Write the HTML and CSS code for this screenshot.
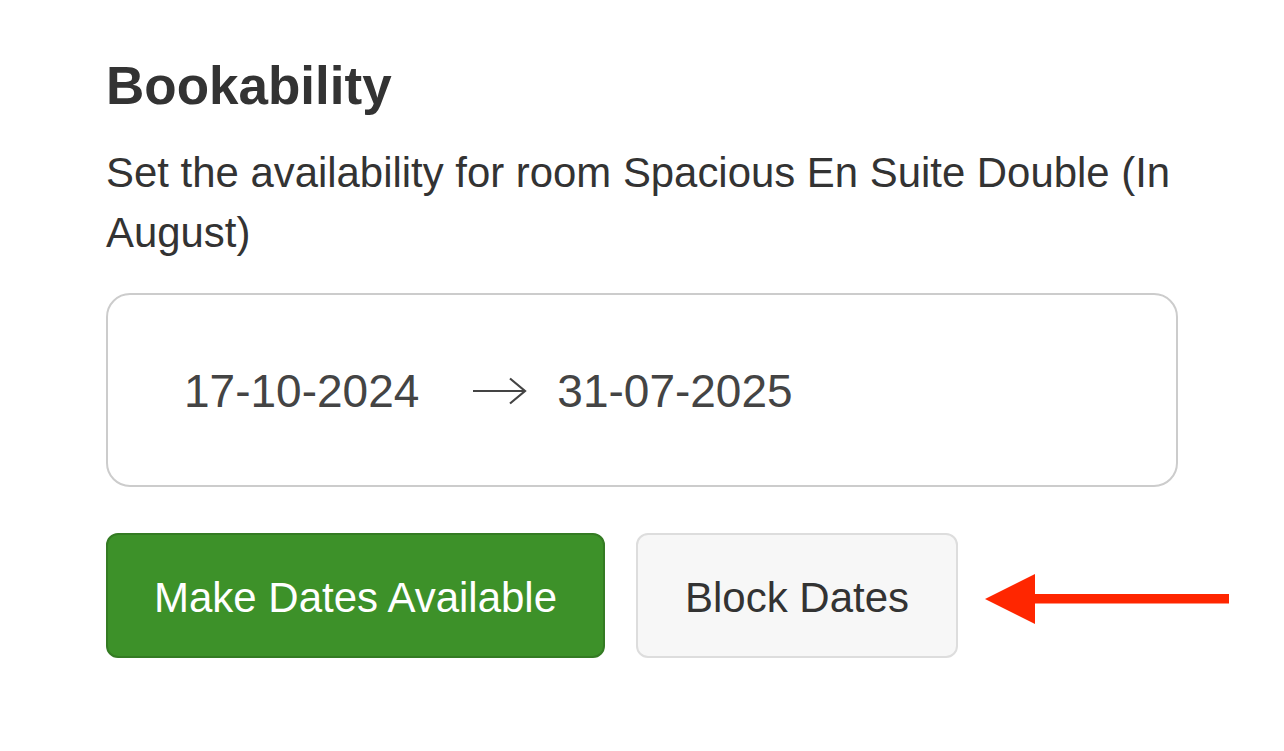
FILE: index.html
```html
<!DOCTYPE html>
<html>
<head>
<meta charset="utf-8">
<link rel="stylesheet" href="styles.css">
</head>
<body>
<div class="panel">
  <h1 class="title">Bookability</h1>
  <p class="desc">Set the availability for room Spacious En Suite Double (In August)</p>
  <div class="range">
    <span class="date">17-10-2024</span>
    <svg class="sep" width="56" height="30" viewBox="0 0 56 30" aria-label="to">
      <path d="M1 15 H53 M38 2.5 L53 15 L38 27.5" fill="none" stroke="#444" stroke-width="2.2"/>
    </svg>
    <span class="date">31-07-2025</span>
  </div>
  <div class="actions">
    <button class="btn btn-green">Make Dates Available</button>
    <button class="btn btn-light">Block Dates</button>
    <svg class="pointer" width="245" height="52" viewBox="0 0 245 52">
      <polygon points="0,26 50,1 50,51" fill="#ff2600"/>
      <rect x="45" y="21" width="199" height="9.5" fill="#ff2600"/>
    </svg>
  </div>
</div>
</body>
</html>
```
FILE: styles.css
```css
html, body {
  margin: 0;
  padding: 0;
  background: #fff;
}
body {
  font-family: "Liberation Sans", Arial, Helvetica, sans-serif;
  color: #333;
}
.panel {
  width: 1072px;
  padding: 51px 0 0 106px;
}
.title {
  margin: 0;
  font-size: 53px;
  font-weight: bold;
  line-height: 70px;
  color: #333;
}
.desc {
  margin: 22px 0 0 0;
  font-size: 41.9px;
  line-height: 60px;
  color: #333;
}
.range {
  margin-top: 30px;
  height: 194px;
  box-sizing: border-box;
  border: 2.5px solid #cccccc;
  border-radius: 24px;
  display: flex;
  align-items: center;
  padding: 2px 0 0 76px;
  font-size: 46px;
  color: #444;
}
.sep {
  margin: 0 29px 0 53px;
  flex: none;
}
.actions {
  margin-top: 46px;
  display: flex;
  align-items: flex-start;
  gap: 31px;
}
.btn {
  height: 125px;
  box-sizing: border-box;
  border-radius: 12px;
  font-family: "Liberation Sans", Arial, Helvetica, sans-serif;
  font-size: 42px;
  padding: 4px 0 0 0;
  flex: none;
}
.btn-green {
  background: #3d9129;
  border: 2.5px solid #347b23;
  color: #fff;
  width: 499px;
}
.btn-light {
  background: #f7f7f7;
  border: 2.5px solid #dddddd;
  color: #333;
  width: 322px;
}
.pointer {
  flex: none;
  margin: 40px 0 0 -4px;
}
```
